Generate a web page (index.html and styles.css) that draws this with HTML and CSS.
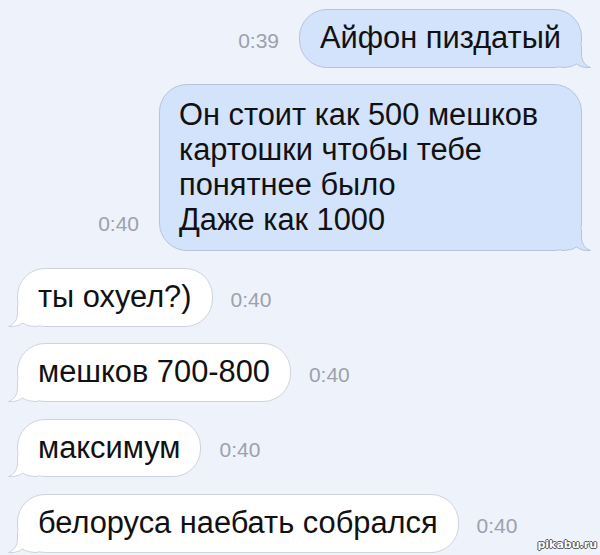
FILE: index.html
```html
<!DOCTYPE html>
<html lang="ru">
<head>
    <meta charset="UTF-8">
    <meta name="viewport" content="width=device-width, initial-scale=1.0">
    <title>Переписка</title>
    <link rel="stylesheet" href="styles.css">
</head>
<body>
    <div class="chat">
        <!-- Outgoing messages -->
        <div class="row out">
            <span class="time">0:39</span>
            <div class="bubble">Айфон пиздатый
                <svg class="tail" viewBox="0 0 30 22" width="30" height="22">
                    <path class="tail-fill" d="M20.5 0 L20.5 8 C20.5 14 23 19 29.5 21.5 C25 22 19 21 15.5 18 C12 20.5 7 21.5 0 21.5 L0 0 Z"/>
                    <path class="tail-line" d="M20.5 0 L20.5 8 C20.5 14 23 19 29.5 21.5 C25 22 19 21 15.5 18 C12 20.5 7 21.5 0 21.5"/>
                </svg>
            </div>
        </div>
        <div class="row out">
            <span class="time">0:40</span>
            <div class="bubble bubble-wide">Он стоит как 500 мешков<br>картошки чтобы тебе<br>понятнее было<br>Даже как 1000
                <svg class="tail" viewBox="0 0 30 22" width="30" height="22">
                    <path class="tail-fill" d="M20.5 0 L20.5 8 C20.5 14 23 19 29.5 21.5 C25 22 19 21 15.5 18 C12 20.5 7 21.5 0 21.5 L0 0 Z"/>
                    <path class="tail-line" d="M20.5 0 L20.5 8 C20.5 14 23 19 29.5 21.5 C25 22 19 21 15.5 18 C12 20.5 7 21.5 0 21.5"/>
                </svg>
            </div>
        </div>

        <!-- Incoming messages -->
        <div class="row in">
            <div class="bubble">ты охуел?)
                <svg class="tail" viewBox="0 0 30 22" width="30" height="22">
                    <path class="tail-fill" d="M20.5 0 L20.5 8 C20.5 14 23 19 29.5 21.5 C25 22 19 21 15.5 18 C12 20.5 7 21.5 0 21.5 L0 0 Z"/>
                    <path class="tail-line" d="M20.5 0 L20.5 8 C20.5 14 23 19 29.5 21.5 C25 22 19 21 15.5 18 C12 20.5 7 21.5 0 21.5"/>
                </svg>
            </div>
            <span class="time">0:40</span>
        </div>
        <div class="row in">
            <div class="bubble">мешков 700-800
                <svg class="tail" viewBox="0 0 30 22" width="30" height="22">
                    <path class="tail-fill" d="M20.5 0 L20.5 8 C20.5 14 23 19 29.5 21.5 C25 22 19 21 15.5 18 C12 20.5 7 21.5 0 21.5 L0 0 Z"/>
                    <path class="tail-line" d="M20.5 0 L20.5 8 C20.5 14 23 19 29.5 21.5 C25 22 19 21 15.5 18 C12 20.5 7 21.5 0 21.5"/>
                </svg>
            </div>
            <span class="time">0:40</span>
        </div>
        <div class="row in">
            <div class="bubble">максимум
                <svg class="tail" viewBox="0 0 30 22" width="30" height="22">
                    <path class="tail-fill" d="M20.5 0 L20.5 8 C20.5 14 23 19 29.5 21.5 C25 22 19 21 15.5 18 C12 20.5 7 21.5 0 21.5 L0 0 Z"/>
                    <path class="tail-line" d="M20.5 0 L20.5 8 C20.5 14 23 19 29.5 21.5 C25 22 19 21 15.5 18 C12 20.5 7 21.5 0 21.5"/>
                </svg>
            </div>
            <span class="time">0:40</span>
        </div>
        <div class="row in">
            <div class="bubble">белоруса наебать собрался
                <svg class="tail" viewBox="0 0 30 22" width="30" height="22">
                    <path class="tail-fill" d="M20.5 0 L20.5 8 C20.5 14 23 19 29.5 21.5 C25 22 19 21 15.5 18 C12 20.5 7 21.5 0 21.5 L0 0 Z"/>
                    <path class="tail-line" d="M20.5 0 L20.5 8 C20.5 14 23 19 29.5 21.5 C25 22 19 21 15.5 18 C12 20.5 7 21.5 0 21.5"/>
                </svg>
            </div>
            <span class="time">0:40</span>
        </div>
    </div>

    <!-- Site watermark -->
    <div class="watermark">pikabu.ru</div>
</body>
</html>
```

FILE: styles.css
```css
body {
    margin: 0;
    background-color: #eef2fb;
    font-family: "Liberation Sans", Arial, sans-serif;
    color: #111;
    height: 555px;
    overflow: hidden;
    position: relative;
}
.chat {
    display: flex;
    flex-direction: column;
    gap: 16.7px;
    padding: 9px 18px 0 17px;
}
.row {
    display: flex;
    align-items: flex-end;
}
.row.out {
    justify-content: flex-end;
    gap: 20px;
}
.row.in {
    justify-content: flex-start;
    gap: 18px;
}
.time {
    font-size: 21px;
    line-height: 24px;
    color: #9ca1ab;
    margin-bottom: 15px;
}
/* Message bubbles */
.bubble {
    position: relative;
    font-size: 30.8px;
    line-height: 34.7px;
    padding: 11px 20px;
    border-radius: 28px;
    white-space: nowrap;
}
.out .bubble {
    background-color: #d3e3fb;
    border: 1px solid #b6c4d9;
}
.in .bubble {
    background-color: #fff;
    border: 1px solid #cfd3dc;
}
.bubble-wide {
    box-sizing: border-box;
    width: 423px;
    padding: 13px 19px;
}
/* Bubble tails */
.tail {
    position: absolute;
    bottom: -1px;
    right: -10px;
    overflow: visible;
}
.in .tail {
    right: auto;
    left: -10px;
    transform: scaleX(-1);
}
.tail-line {
    fill: none;
    stroke-width: 1;
}
.out .tail-fill { fill: #d3e3fb; }
.out .tail-line { stroke: #b6c4d9; }
.in .tail-fill { fill: #fff; }
.in .tail-line { stroke: #cfd3dc; }
.watermark {
    position: absolute;
    right: 3px;
    bottom: 4px;
    font-family: "DejaVu Sans", sans-serif;
    font-size: 11px;
    font-weight: bold;
    color: #fff;
    text-shadow: -1px 0 #555, 1px 0 #555, 0 -1px #555, 0 1px #555;
}
```
